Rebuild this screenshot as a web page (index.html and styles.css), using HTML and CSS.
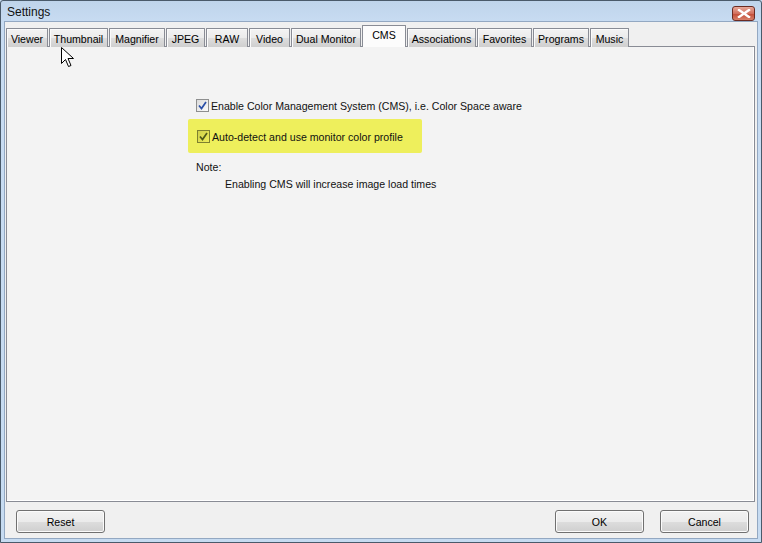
FILE: index.html
```html
<!DOCTYPE html>
<html>
<head>
<meta charset="utf-8">
<link rel="stylesheet" href="styles.css">
</head>
<body>
<div class="window">
  <div class="titlebar">
    <span class="title">Settings</span>
    <span class="close"><svg width="14" height="9" viewBox="0 0 14 9"><path d="M2 1 L12 8 M12 1 L2 8" stroke="#fff" stroke-width="2.4" stroke-linecap="square"/></svg></span>
  </div>
  <div class="client">
    <div class="tabs">
      <div class="tab w43">Viewer</div>
      <div class="tab w60">Thumbnail</div>
      <div class="tab w57">Magnifier</div>
      <div class="tab w40">JPEG</div>
      <div class="tab w43">RAW</div>
      <div class="tab w42">Video</div>
      <div class="tab w71">Dual Monitor</div>
      <div class="tab active w45">CMS</div>
      <div class="tab w70">Associations</div>
      <div class="tab w56">Favorites</div>
      <div class="tab w57">Programs</div>
      <div class="tab w40">Music</div>
    </div>
    <div class="panel">
      <div class="options">
        <label class="row">
          <span class="cb"><svg width="9" height="9" viewBox="0 0 9 9"><path d="M1 4.5 L3.5 7.5 L8 1" fill="none" stroke="#2a4fa8" stroke-width="1.7"/></svg></span>
          <span>Enable Color Management System (CMS), i.e. Color Space aware</span>
        </label>
        <div class="highlight">
          <label class="row">
            <span class="cb cb-hl"><svg width="9" height="9" viewBox="0 0 9 9"><path d="M1 4.5 L3.5 7.5 L8 1" fill="none" stroke="#4f5a1a" stroke-width="1.7"/></svg></span>
            <span>Auto-detect and use monitor color profile</span>
          </label>
        </div>
        <div class="note">Note:</div>
        <div class="note-text">Enabling CMS will increase image load times</div>
      </div>
    </div>
    <div class="buttons">
      <button class="btn">Reset</button>
      <div class="spacer"></div>
      <button class="btn">OK</button>
      <button class="btn">Cancel</button>
    </div>
  </div>
  <svg class="cursor" width="14" height="22" viewBox="0 0 14 22"><path d="M0.5 0.5 L0.5 16.5 L4.5 12.5 L7.5 19.5 L10 18.5 L7 11.5 L12.5 11.5 Z" fill="#fff" stroke="#000" stroke-width="1" stroke-linejoin="round"/></svg>
</div>
</body>
</html>
```
FILE: styles.css
```css
* { box-sizing: border-box; }
html, body { margin: 0; padding: 0; }
body {
  width: 762px;
  height: 543px;
  overflow: hidden;
  font-family: "Liberation Sans", sans-serif;
  font-size: 10.6px;
  color: #000;
  background: #c6dbf1;
}
.window {
  position: relative;
  width: 762px;
  height: 543px;
  border: 1px solid #4a5a6a;
  border-radius: 3px 3px 0 0;
  background: linear-gradient(#bfd4eb, #c8dcf2 22px, #c6dbf1);
  display: flex;
  flex-direction: column;
  padding: 0 3px 3px 3px;
}
.titlebar {
  height: 21px;
  display: flex;
  align-items: center;
  justify-content: space-between;
  padding-left: 3px;
  padding-right: 3px;
}
.title {
  font-family: "Liberation Sans", sans-serif;
  font-size: 12px;
  color: #111;
  margin-top: 1px;
}
.close {
  width: 23px;
  height: 15px;
  margin-top: 4px;
  border: 1px solid #6b2b22;
  border-radius: 3px;
  background: linear-gradient(#e8a99b, #d2705e 50%, #c24a35 51%, #d8806a);
  display: flex;
  align-items: center;
  justify-content: center;
}
.client {
  flex: 1;
  background: #f0f0f0;
  border: 1px solid #93a8c2;
  display: flex;
  flex-direction: column;
  padding: 4px 1px 0 1px;
}
.tabs {
  display: flex;
  align-items: flex-end;
  height: 21px;
  position: relative;
  z-index: 1;
  margin-bottom: -1px;
}
.tab {
  flex: none;
  height: 19px;
  padding: 2px 0 0 0;
  border: 1px solid #898c95;
  border-bottom: none;
  border-radius: 1px 1px 0 0;
  margin-right: 1px;
  background: linear-gradient(#f3f3f3, #ebebeb 50%, #dddddd 51%, #cfcfcf);
  box-shadow: inset 1px 1px 0 #fbfbfb;
  display: flex;
  align-items: center;
  justify-content: center;
  color: #000;
  white-space: nowrap;
}
.w40 { width: 39px; }
.w42 { width: 41px; }
.w43 { width: 42px; }
.w45 { width: 44px; }
.w56 { width: 55px; }
.w57 { width: 56px; }
.w60 { width: 59px; }
.w70 { width: 69px; }
.w71 { width: 70px; }
.tab.active {
  height: 22px;
  background: #fcfcfc;
  box-shadow: none;
  padding: 0 0 4px 0;
}
.panel {
  height: 456px;
  border: 1px solid #898c95;
  background: #f3f3f3;
  box-shadow: inset -1px -1px 0 #ffffff;
  margin-right: 1px;
  padding: 52px 0 0 181px;
}
.options {
  display: flex;
  flex-direction: column;
  color: #111;
}
.row {
  display: flex;
  align-items: center;
  gap: 2px;
  padding-left: 8px;
  height: 13px;
}
.cb {
  width: 13px;
  height: 13px;
  border: 1px solid #8e8f8f;
  background: linear-gradient(135deg, #dcdcdc, #fbfbfb);
  display: flex;
  align-items: center;
  justify-content: center;
}
.cb-hl {
  border-color: #7e8030;
  background: linear-gradient(135deg, #cfd04a, #eeee5a);
}
.highlight {
  margin-top: 7px;
  width: 234px;
  height: 34px;
  background: #eeef5c;
  border-radius: 2px;
  display: flex;
  align-items: center;
  padding-left: 1px;
  padding-top: 1px;
}
.note {
  margin-top: 7px;
  padding-left: 8px;
  line-height: 14px;
}
.note-text {
  margin-top: 3px;
  padding-left: 37px;
  line-height: 14px;
}
.buttons {
  display: flex;
  align-items: center;
  height: 36px;
  padding: 0 7px 0 10px;
  gap: 16px;
}
.spacer { flex: 1; }
.btn {
  width: 89px;
  height: 23px;
  border: 1px solid #707070;
  border-radius: 3px;
  background: linear-gradient(#f2f2f2, #ebebeb 50%, #dddddd 51%, #cfcfcf);
  box-shadow: inset 0 0 0 1px #fbfbfb;
  font-family: "Liberation Sans", sans-serif;
  font-size: 10.6px;
  color: #000;
  padding: 0;
  margin-top: 3px;
}
.cursor {
  position: absolute;
  left: 60px;
  top: 46px;
}
```
